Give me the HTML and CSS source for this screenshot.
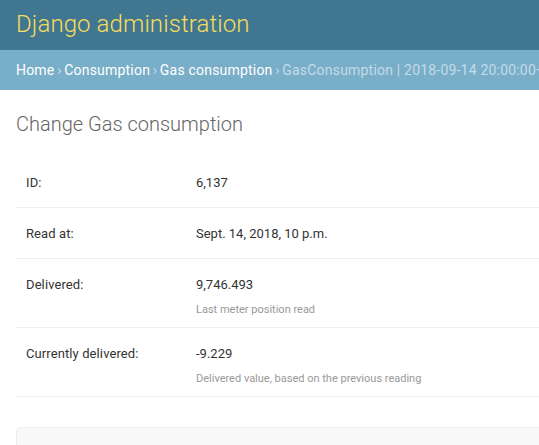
FILE: index.html
```html
<!DOCTYPE html>
<html lang="en">
<head>
    <meta charset="UTF-8">
    <title>Change Gas consumption | Django site admin</title>
    <link rel="stylesheet" href="styles.css">
</head>
<body>

<div id="header">
    <div id="branding">Django administration</div>
</div>

<div class="breadcrumbs">
    <a href="#">Home</a>
    <span class="sep">&rsaquo;</span>
    <a href="#">Consumption</a>
    <span class="sep">&rsaquo;</span>
    <a href="#">Gas consumption</a>
    <span class="sep">&rsaquo;</span>
    GasConsumption | 2018-09-14 20:00:00+00:00
</div>

<div id="content">
    <h1>Change Gas consumption</h1>

    <fieldset class="module">
        <div class="form-row">
            <label>ID:</label>
            <div class="field">
                <div class="readonly">6,137</div>
            </div>
        </div>
        <div class="form-row">
            <label>Read at:</label>
            <div class="field">
                <div class="readonly">Sept. 14, 2018, 10 p.m.</div>
            </div>
        </div>
        <div class="form-row">
            <label>Delivered:</label>
            <div class="field">
                <div class="readonly">9,746.493</div>
                <div class="help">Last meter position read</div>
            </div>
        </div>
        <div class="form-row">
            <label>Currently delivered:</label>
            <div class="field">
                <div class="readonly">-9.229</div>
                <div class="help">Delivered value, based on the previous reading</div>
            </div>
        </div>
    </fieldset>

    <div class="submit-row"></div>
</div>

</body>
</html>
```

FILE: styles.css
```css
html, body {
    margin: 0;
    padding: 0;
}
body {
    font-family: Roboto, "Liberation Sans", sans-serif;
    font-size: 14px;
    color: #333;
    background: #fff;
    overflow: hidden;
}

#header {
    height: 50px;
    padding: 0 16px;
    background: #417690;
    display: flex;
    align-items: center;
}
#branding {
    color: #f5dd5d;
    font-size: 24px;
    font-weight: 300;
    line-height: 30px;
    margin-top: -3px;
    letter-spacing: 0.1px;
}

.breadcrumbs {
    height: 40px;
    line-height: 40px;
    padding: 0 16px;
    background: #79aec8;
    color: #c4dce8;
    font-size: 14px;
    letter-spacing: 0.2px;
    white-space: nowrap;
    overflow: hidden;
}
.breadcrumbs a {
    color: #fff;
    text-decoration: none;
}
.breadcrumbs .sep {
    margin: 0 -1px;
}

#content {
    padding: 22px 16px 0;
    width: 700px;
}
#content h1 {
    margin: 0 0 21px;
    font-size: 20px;
    font-weight: 300;
    line-height: 24px;
    color: #666;
}

fieldset {
    margin: 0 0 30px;
    padding: 0;
    border: none;
}

.form-row {
    display: flex;
    padding: 10px;
    border-bottom: 1px solid #eee;
    font-size: 13px;
}
.form-row label {
    width: 170px;
    flex: none;
    padding: 8px 0 6px;
    line-height: 16px;
    color: #333;
    letter-spacing: 0.1px;
}
.readonly {
    padding: 8px 0 6px;
    line-height: 16px;
}
.help {
    margin-top: 4px;
    font-size: 11px;
    line-height: 14px;
    color: #999;
}

.submit-row {
    height: 60px;
    background: #f8f8f8;
    border: 1px solid #eee;
    border-radius: 4px;
}
```
